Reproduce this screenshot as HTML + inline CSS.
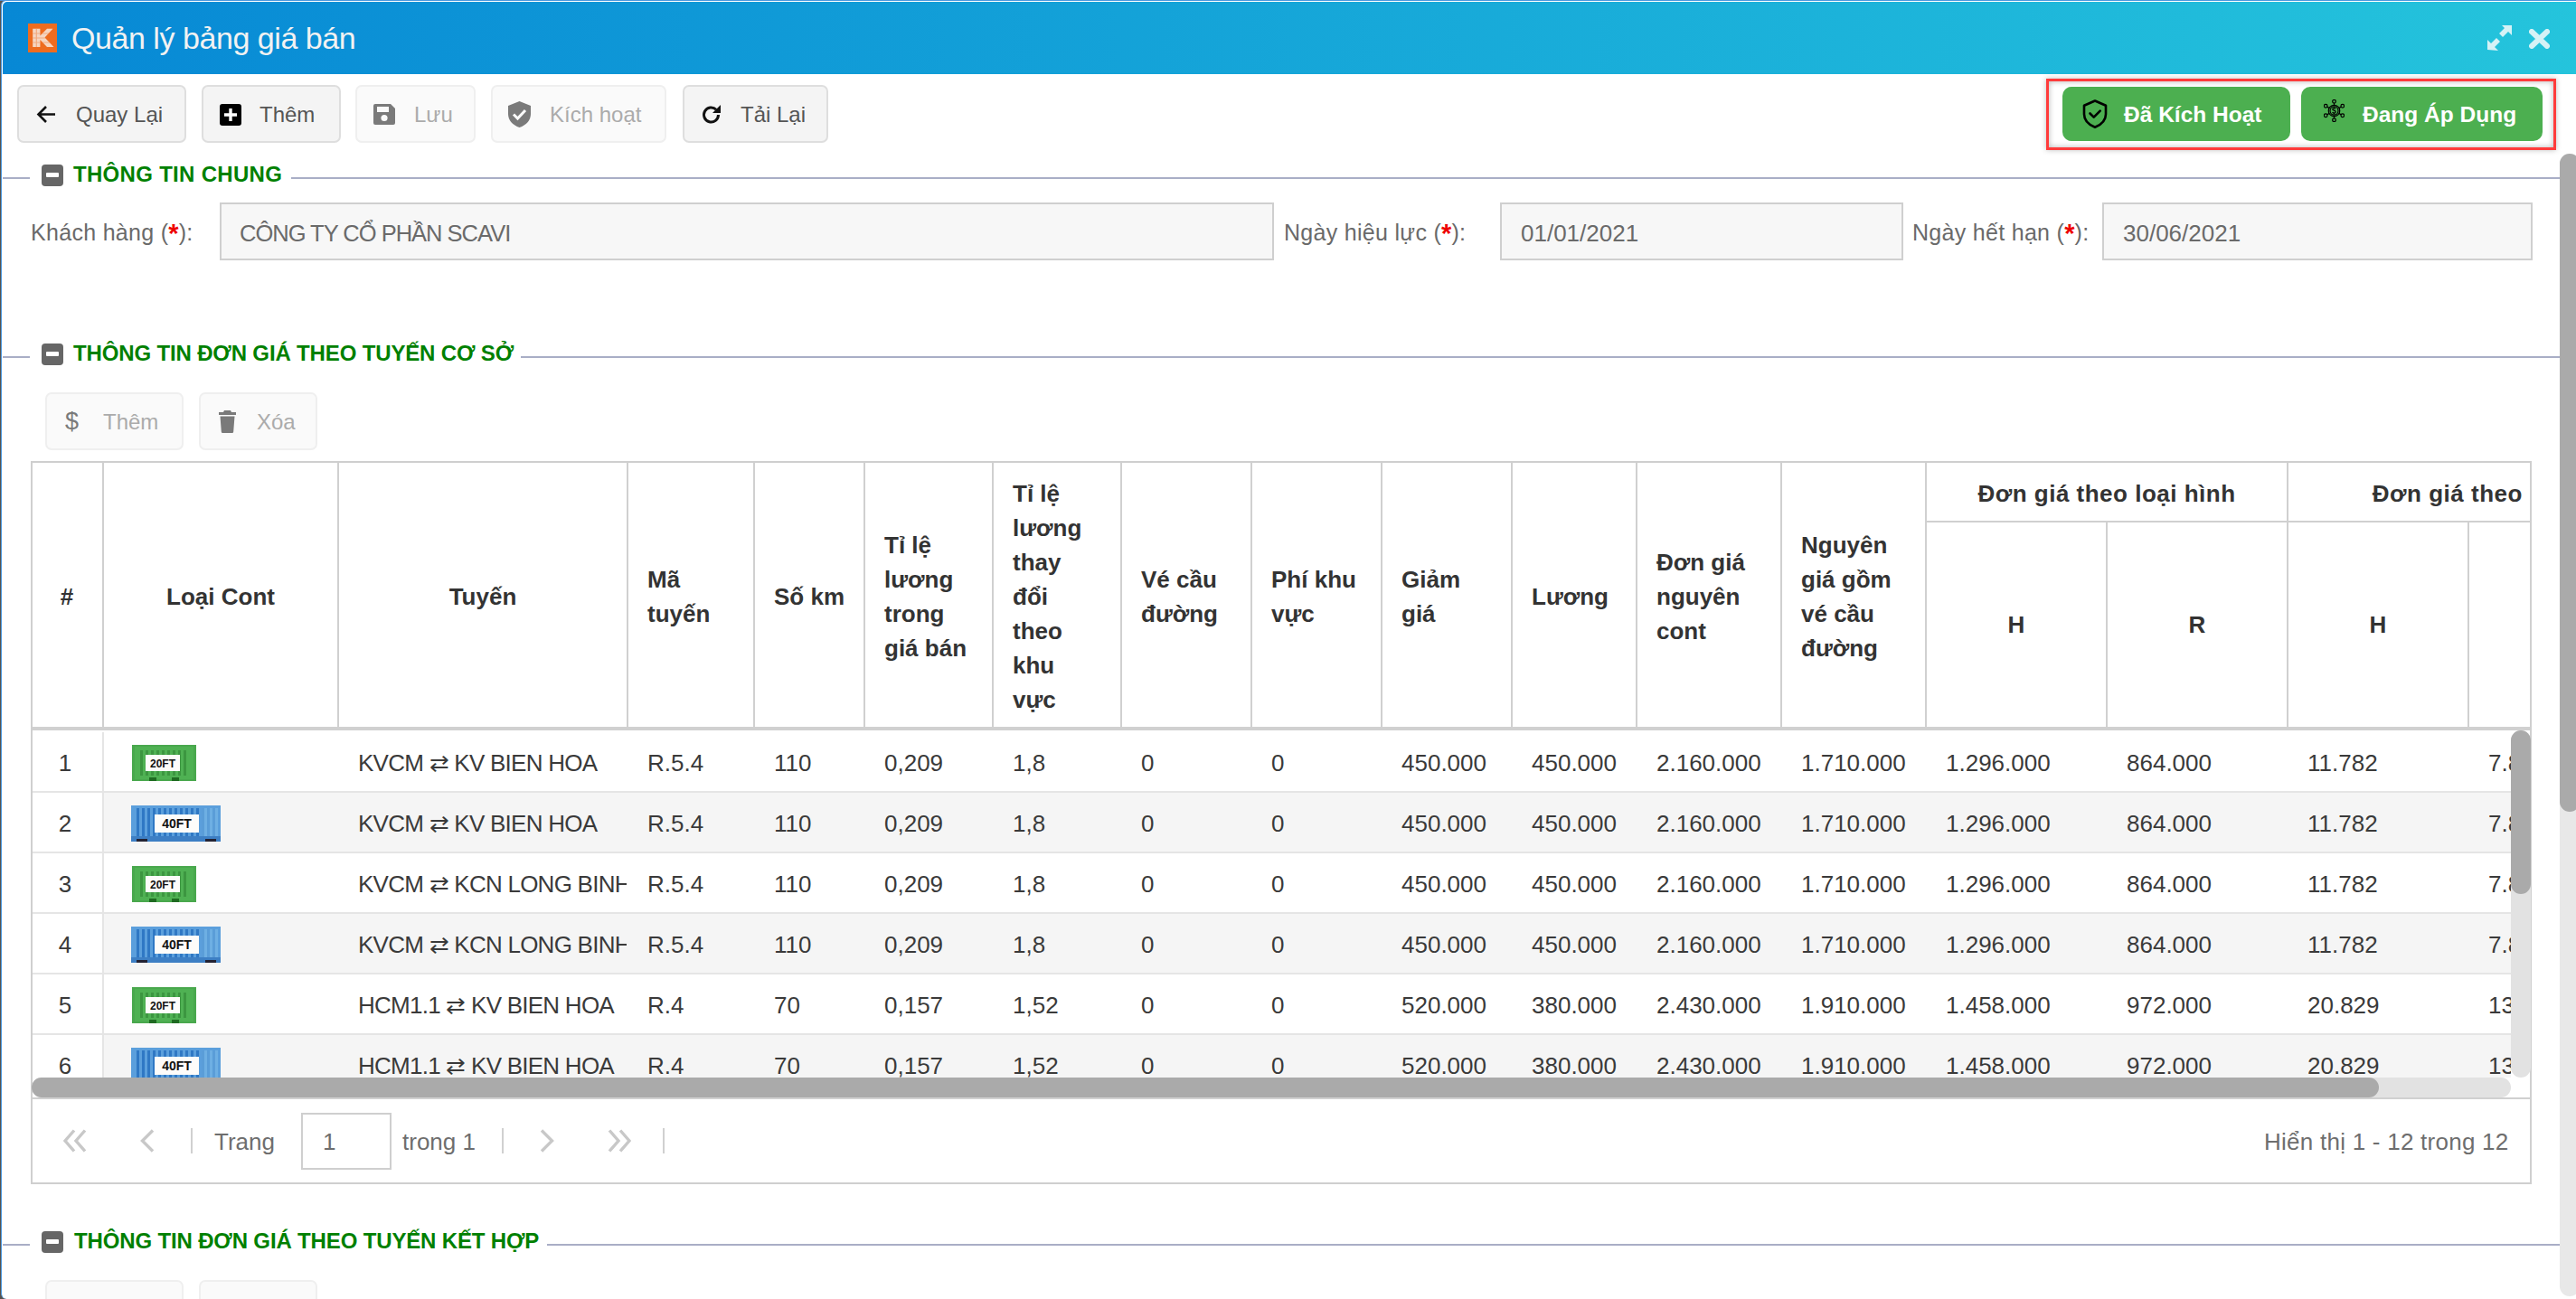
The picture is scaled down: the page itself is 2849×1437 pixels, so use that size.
<!DOCTYPE html>
<html><head><meta charset="utf-8">
<style>
*{box-sizing:border-box;margin:0;padding:0}
html,body{width:2849px;height:1437px;overflow:hidden;background:#57534f;font-family:"Liberation Sans",sans-serif}
.a{position:absolute}
.t{position:absolute;white-space:nowrap;line-height:1}
#topline{left:0;top:0;width:2849px;height:1px;background:#4a90d9}
#win{left:1px;top:0;width:2900px;height:1437px;background:#fff;border:1px solid #4a98df;border-bottom:0;border-radius:6px}
#tbar{left:3px;top:2px;width:2900px;height:80px;background:linear-gradient(90deg,#0788d5 0%,#25c5dc 100%);border-radius:5px 0 0 0}
.btn{position:absolute;top:94px;height:64px;border:2px solid #dedede;background:#f4f4f4;border-radius:7px}
.btn.dis{border-color:#efefef;background:#fafafa}
.bt{position:absolute;font-size:24px;color:#555;white-space:nowrap;line-height:1}
.dis .bt{color:#ababab}
.sline{position:absolute;height:2px;background:#a9aec6}
.minus{position:absolute;width:24px;height:24px;background:#666;border-radius:4px}
.minus:after{content:"";position:absolute;left:5px;top:9px;width:14px;height:5px;background:#fff;border-radius:1px}
.stitle{position:absolute;font-weight:bold;color:#008000;font-size:24px;white-space:nowrap;line-height:1}
.lbl{position:absolute;font-size:25px;letter-spacing:.3px;color:#6a6a6a;white-space:nowrap;line-height:1}
.lbl b{color:#e00;font-weight:bold;font-size:29px;line-height:0;position:relative;top:2px;letter-spacing:0}
.inp{position:absolute;top:224px;height:64px;border:2px solid #cfcfcf;background:#f7f7f7}
.inp span{position:absolute;font-size:24px;color:#6a6a6a;white-space:nowrap;line-height:1}
.gbtn{position:absolute;top:96px;height:60px;background:#4caf50;border-radius:10px}
.gbtn .gt{position:absolute;font-weight:bold;font-size:24.5px;color:#fff;white-space:nowrap;line-height:1}
.hc{position:absolute;display:flex;align-items:center;padding:3px 10px 0 22px;font-weight:bold;font-size:26px;line-height:38px;color:#333;white-space:nowrap}
.hc.cen{justify-content:center;text-align:center;padding-left:0;padding-right:0}
.vs{position:absolute;width:2px;background:#d0d0d0}
.hs{position:absolute;height:2px;background:#d0d0d0}
.bc{position:absolute;height:65px;line-height:65px;font-size:26px;color:#3a3a3a;white-space:nowrap;padding-top:2px}
.bc.cen{text-align:center}
.sbtn{position:absolute;height:64px;border:2px solid #efefef;background:#fafafa;border-radius:7px}
.sbtn .bt{color:#ababab}
.pg{position:absolute;font-size:26px;color:#6e6e6e;white-space:nowrap;line-height:1}
.pvs{position:absolute;width:2px;height:28px;background:#d0d0d0}
</style></head>
<body>
<svg width="0" height="0" style="position:absolute">
<defs>
<symbol id="c20" viewBox="0 0 71 40">
<rect x="0" y="0" width="71" height="40" fill="#49a84d"/>
<rect x="3" y="2" width="65" height="36" fill="#4fb153"/>
<g fill="#3c9640"><rect x="9" y="6" width="3" height="28"/><rect x="15" y="6" width="3" height="28"/><rect x="21" y="6" width="3" height="28"/><rect x="27" y="6" width="3" height="28"/><rect x="33" y="6" width="3" height="28"/><rect x="39" y="6" width="3" height="28"/><rect x="45" y="6" width="3" height="28"/><rect x="51" y="6" width="3" height="28"/><rect x="57" y="6" width="3" height="28"/></g>
<rect x="15" y="11" width="38" height="18" fill="#fdfcfa"/>
<text x="34" y="25" font-family="Liberation Sans" font-weight="bold" font-size="12" text-anchor="middle" fill="#111">20FT</text>
<rect x="19" y="36" width="8" height="4" fill="#1f6b22"/><rect x="44" y="36" width="8" height="4" fill="#1f6b22"/>
</symbol>
<symbol id="c40" viewBox="0 0 99 40">
<rect x="0" y="0" width="99" height="40" fill="#5b9fdc"/>
<g fill="#2f78c4"><rect x="6" y="3" width="3" height="31"/><rect x="12" y="3" width="3" height="31"/><rect x="18" y="3" width="3" height="31"/><rect x="24" y="3" width="3" height="31"/><rect x="30" y="3" width="3" height="31"/><rect x="36" y="3" width="3" height="31"/><rect x="42" y="3" width="3" height="31"/><rect x="48" y="3" width="3" height="31"/><rect x="54" y="3" width="3" height="31"/><rect x="60" y="3" width="3" height="31"/><rect x="66" y="3" width="3" height="31"/><rect x="72" y="3" width="3" height="31"/><rect x="78" y="3" width="3" height="31"/><rect x="84" y="3" width="3" height="31"/><rect x="90" y="3" width="3" height="31"/></g>
<rect x="78" y="3" width="18" height="31" fill="#7dbbe9" opacity=".55"/>
<rect x="26" y="10" width="49" height="20" fill="#fdfcfa"/>
<text x="50.5" y="25" font-family="Liberation Sans" font-weight="bold" font-size="14" text-anchor="middle" fill="#111">40FT</text>
<rect x="0" y="34" width="99" height="6" fill="#3d7fc4"/>
<rect x="6" y="37" width="12" height="3" fill="#223"/><rect x="82" y="37" width="12" height="3" fill="#223"/>
</symbol>
</defs></svg>
<div id="topline" class="a"></div>
<div id="win" class="a"></div>
<div id="tbar" class="a"></div>

<!-- logo -->
<div class="a" style="left:31px;top:26px;width:32px;height:32px;background:#ee6c1f"></div>
<svg class="a" style="left:31px;top:26px" width="32" height="32" viewBox="0 0 32 32"><defs><clipPath id="kc"><path d="M5.2 5.8H13.4V13.5L21 5.8H27.5L18.5 15.5L28.5 26H21L13.4 18V26H5.2Z"/></clipPath></defs><path d="M5.2 5.8H13.4V13.5L21 5.8H27.5L18.5 15.5L28.5 26H21L13.4 18V26H5.2Z" fill="#f6d6c2"/><g clip-path="url(#kc)" stroke="#f0a070" stroke-width="1.2" opacity=".8"><path d="M9.3 5v22M4 16h26M4 11h26M4 21h26"/></g></svg>
<div class="t" id="title" style="left:79px;top:24.5px;font-size:34px;letter-spacing:-.45px;color:#f2f2f2">Quản lý bảng giá bán</div>

<!-- expand / close -->
<svg class="a" style="left:2750px;top:27px" width="29" height="29" viewBox="0 0 29 29" fill="#d5f2f6"><path d="M17 1h11v11l-4-4-6 6-4-4 6-6z"/><path d="M1 28V17l4 4 6-6 4 4-6 6 4 4z"/></svg>
<svg class="a" style="left:2797px;top:32px" width="23" height="22" viewBox="0 0 23 22"><path d="M3 3L20 19M20 3L3 19" stroke="#d5f2f6" stroke-width="6" stroke-linecap="round"/></svg>

<!-- toolbar -->
<div class="btn" style="left:19px;width:187px"><div class="bt" style="left:63px;top:19px">Quay Lại</div></div>
<div class="btn" style="left:223px;width:154px"><div class="bt" style="left:62px;top:19px">Thêm</div></div>
<div class="btn dis" style="left:393px;width:133px"><div class="bt" style="left:63px;top:19px">Lưu</div></div>
<div class="btn dis" style="left:543px;width:194px"><div class="bt" style="left:63px;top:19px">Kích hoạt</div></div>
<div class="btn" style="left:755px;width:161px"><div class="bt" style="left:62px;top:19px">Tải Lại</div></div>


<!-- toolbar icons -->
<svg class="a" style="left:40px;top:116px" width="22" height="21" viewBox="0 0 22 21"><path d="M21 10.5H3M11 2L2.5 10.5 11 19" fill="none" stroke="#111" stroke-width="2.6"/></svg>
<svg class="a" style="left:243px;top:115px" width="24" height="24" viewBox="0 0 24 24"><rect x="0" y="0" width="24" height="24" rx="3" fill="#000"/><path d="M12 5v14M5 12h14" stroke="#fff" stroke-width="3.4"/></svg>
<svg class="a" style="left:413px;top:115px" width="24" height="23" viewBox="0 0 24 23"><path d="M2 0h17l5 5v16a2 2 0 0 1-2 2H2a2 2 0 0 1-2-2V2a2 2 0 0 1 2-2z" fill="#7a7a7a"/><rect x="4" y="3" width="13" height="6" fill="#fafafa"/><circle cx="12" cy="15.5" r="3.6" fill="#fafafa"/></svg>
<svg class="a" style="left:562px;top:112px" width="25" height="29" viewBox="0 0 25 29"><path d="M12.5 0L25 5v9c0 7-5 12.5-12.5 15C5 26.5 0 21 0 14V5z" fill="#7a7a7a"/><path d="M6 14.5l4.5 4.5 8.5-9" fill="none" stroke="#fafafa" stroke-width="3"/></svg>
<svg class="a" style="left:775px;top:115px" width="24" height="24" viewBox="0 0 24 24"><path d="M19.5 12a8 8 0 1 1-2.4-5.7" fill="none" stroke="#111" stroke-width="3"/><path d="M22 1v9h-9z" fill="#111"/></svg>
<!-- red box -->
<div class="a" style="left:2263px;top:87px;width:564px;height:79px;border:3px solid #ff3b3b;box-shadow:0 0 6px rgba(0,0,0,.25), inset 0 0 6px rgba(0,0,0,.3)"></div>
<div class="gbtn" style="left:2281px;width:252px"><div class="gt" style="left:68px;top:19px">Đã Kích Hoạt</div></div>
<div class="gbtn" style="left:2545px;width:267px"><div class="gt" style="left:68px;top:19px">Đang Áp Dụng</div></div>
<!-- green button icons -->
<svg class="a" style="left:2303px;top:110px" width="28" height="32" viewBox="0 0 28 32"><path d="M14 1.5L26 6.8v9.5c0 6.5-5 11.7-12 14.5C7 28 2 22.8 2 16.3V6.8z" fill="none" stroke="#000" stroke-width="2.6" stroke-linejoin="round"/><path d="M8.5 15.5l4.2 4.2 7-7" fill="none" stroke="#000" stroke-width="2.6" stroke-linecap="round" stroke-linejoin="round"/></svg>
<svg class="a" style="left:2569.5px;top:110px" width="23" height="25" viewBox="0 0 24 26" fill="none" stroke="#000" stroke-width="1.3"><circle cx="12" cy="13" r="6.5"/><circle cx="12" cy="13" r="4.7"/><circle cx="12" cy="2.3" r="1.9"/><circle cx="12" cy="23.7" r="1.9"/><circle cx="2.3" cy="7.5" r="1.9"/><circle cx="21.7" cy="7.5" r="1.9"/><circle cx="2.3" cy="18.5" r="1.9"/><circle cx="21.7" cy="18.5" r="1.9"/><path d="M12 4.2v2.3M12 19.5v2.3M4 8.5l2.5 1.5M20 8.5l-2.5 1.5M4 17.5l2.5-1.5M20 17.5l-2.5-1.5"/><path d="M13.6 11c-.3-.8-1-1.1-1.7-1.1-1 0-1.7.6-1.7 1.4 0 1.8 3.5 1 3.5 2.9 0 .9-.8 1.5-1.8 1.5-.8 0-1.5-.4-1.8-1.2M12 8.8v1.1M12 16v1.1"/></svg>


<!-- section 1 -->
<div class="sline" style="left:3px;top:196px;width:30px"></div>
<div class="sline" style="left:322px;top:196px;width:2509px"></div>
<div class="minus" style="left:46px;top:182px"></div>
<div class="stitle" style="left:81px;top:180.5px;letter-spacing:.3px">THÔNG TIN CHUNG</div>

<div class="lbl" style="left:34px;top:245px">Khách hàng (<b>*</b>):</div>
<div class="inp" style="left:243px;width:1166px"><span style="left:20px;top:20px;font-size:25.5px;letter-spacing:-1px">CÔNG TY CỔ PHẦN SCAVI</span></div>
<div class="lbl" style="left:1420px;top:245px">Ngày hiệu lực (<b>*</b>):</div>
<div class="inp" style="left:1659px;width:446px"><span style="left:21px;top:18.5px;font-size:26px">01/01/2021</span></div>
<div class="lbl" style="left:2115px;top:245px">Ngày hết hạn (<b>*</b>):</div>
<div class="inp" style="left:2325px;width:476px"><span style="left:21px;top:18.5px;font-size:26px">30/06/2021</span></div>

<!-- section 2 -->
<div class="sline" style="left:3px;top:394px;width:30px"></div>
<div class="sline" style="left:576px;top:394px;width:2255px"></div>
<div class="minus" style="left:46px;top:380px"></div>
<div class="stitle" style="left:81px;top:378.5px;letter-spacing:-.15px">THÔNG TIN ĐƠN GIÁ THEO TUYẾN CƠ SỞ</div>

<div class="sbtn" style="left:50px;top:434px;width:153px"><div class="bt" style="left:62px;top:19px">Thêm</div></div>
<div class="sbtn" style="left:220px;top:434px;width:131px"><div class="bt" style="left:62px;top:19px">Xóa</div></div>
<div class="t" style="left:72px;top:453px;font-size:27px;color:#7a7a7a">$</div>
<svg class="a" style="left:242px;top:454px" width="19" height="25" viewBox="0 0 19 25"><path d="M6 0h7l1 2h5v3H0V2h5z" fill="#7a7a7a"/><path d="M1.5 6.5h16l-1.3 17a1.5 1.5 0 0 1-1.5 1.5H4.3a1.5 1.5 0 0 1-1.5-1.5z" fill="#7a7a7a"/></svg>
<div class="a" style="left:34px;top:510px;width:2766px;height:800px;border:2px solid #cfcfcf;border-top-width:2px;background:#fff"></div>
<div class="a" id="thead" style="left:36px;top:512px;width:2762px;height:296px;overflow:hidden">
<div class="hc cen" style="left:-2px;top:0px;width:80px;height:292px;"><div>#</div></div>
<div class="hc cen" style="left:78px;top:0px;width:260px;height:292px;"><div>Loại Cont</div></div>
<div class="hc cen" style="left:338px;top:0px;width:320px;height:292px;"><div>Tuyến</div></div>
<div class="hc" style="left:658px;top:0px;width:140px;height:292px;"><div>Mã<br>tuyến</div></div>
<div class="hc" style="left:798px;top:0px;width:122px;height:292px;"><div>Số km</div></div>
<div class="hc" style="left:920px;top:0px;width:142px;height:292px;"><div>Tỉ lệ<br>lương<br>trong<br>giá bán</div></div>
<div class="hc" style="left:1062px;top:0px;width:142px;height:292px;"><div>Tỉ lệ<br>lương<br>thay<br>đổi<br>theo<br>khu<br>vực</div></div>
<div class="hc" style="left:1204px;top:0px;width:144px;height:292px;"><div>Vé cầu<br>đường</div></div>
<div class="hc" style="left:1348px;top:0px;width:144px;height:292px;"><div>Phí khu<br>vực</div></div>
<div class="hc" style="left:1492px;top:0px;width:144px;height:292px;"><div>Giảm<br>giá</div></div>
<div class="hc" style="left:1636px;top:0px;width:138px;height:292px;"><div>Lương</div></div>
<div class="hc" style="left:1774px;top:0px;width:160px;height:292px;"><div>Đơn giá<br>nguyên<br>cont</div></div>
<div class="hc" style="left:1934px;top:0px;width:160px;height:292px;"><div>Nguyên<br>giá gồm<br>vé cầu<br>đường</div></div>
<div class="hc cen" style="left:2094px;top:0px;width:400px;height:65px;"><div><span style="letter-spacing:.5px">Đơn giá theo loại hình</span></div></div>
<div class="hc cen" style="left:2494px;top:0px;width:400px;height:65px;"><div><span style="letter-spacing:.5px">Đơn giá theo km</span></div></div>
<div class="hc cen" style="left:2094px;top:66px;width:200px;height:226px;padding-top:0;"><div>H</div></div>
<div class="hc cen" style="left:2294px;top:66px;width:200px;height:226px;padding-top:0;"><div>R</div></div>
<div class="hc cen" style="left:2494px;top:66px;width:200px;height:226px;padding-top:0;"><div>H</div></div>
<div class="hc cen" style="left:2694px;top:66px;width:200px;height:226px;padding-top:0;"><div>R</div></div>
<div class="vs" style="left:77px;top:0;height:292px"></div>
<div class="vs" style="left:337px;top:0;height:292px"></div>
<div class="vs" style="left:657px;top:0;height:292px"></div>
<div class="vs" style="left:797px;top:0;height:292px"></div>
<div class="vs" style="left:919px;top:0;height:292px"></div>
<div class="vs" style="left:1061px;top:0;height:292px"></div>
<div class="vs" style="left:1203px;top:0;height:292px"></div>
<div class="vs" style="left:1347px;top:0;height:292px"></div>
<div class="vs" style="left:1491px;top:0;height:292px"></div>
<div class="vs" style="left:1635px;top:0;height:292px"></div>
<div class="vs" style="left:1773px;top:0;height:292px"></div>
<div class="vs" style="left:1933px;top:0;height:292px"></div>
<div class="vs" style="left:2093px;top:0;height:292px"></div>
<div class="vs" style="left:2293px;top:65px;height:227px"></div>
<div class="vs" style="left:2493px;top:0;height:292px"></div>
<div class="vs" style="left:2693px;top:65px;height:227px"></div>
<div class="hs" style="left:2094px;top:64px;width:2762px"></div>
</div>
<div class="a" style="left:36px;top:804px;width:2762px;height:4px;background:#d0d0d0"></div>
<div class="a" id="tbody" style="left:36px;top:808px;width:2741px;height:384px;overflow:hidden">
<div class="a" style="left:0;top:67px;width:2800px;height:2px;background:#e5e5e5"></div>
<div class="bc cen" style="left:-2px;top:2px;width:76px">1</div>
<svg class="a" style="left:110px;top:16px" width="71" height="40"><use href="#c20"/></svg>
<div class="bc" style="left:360px;top:2px;width:297px;overflow:hidden;letter-spacing:-.75px">KVCM ⇄ KV BIEN HOA</div>
<div class="bc" style="left:680px;top:2px">R.5.4</div>
<div class="bc" style="left:820px;top:2px">110</div>
<div class="bc" style="left:942px;top:2px">0,209</div>
<div class="bc" style="left:1084px;top:2px">1,8</div>
<div class="bc" style="left:1226px;top:2px">0</div>
<div class="bc" style="left:1370px;top:2px">0</div>
<div class="bc" style="left:1514px;top:2px">450.000</div>
<div class="bc" style="left:1658px;top:2px">450.000</div>
<div class="bc" style="left:1796px;top:2px">2.160.000</div>
<div class="bc" style="left:1956px;top:2px">1.710.000</div>
<div class="bc" style="left:2116px;top:2px">1.296.000</div>
<div class="bc" style="left:2316px;top:2px">864.000</div>
<div class="bc" style="left:2516px;top:2px">11.782</div>
<div class="bc" style="left:2716px;top:2px">7.855</div>
<div class="a" style="left:79px;top:69px;width:2800px;height:65px;background:#f5f5f5"></div>
<div class="a" style="left:0;top:134px;width:2800px;height:2px;background:#e5e5e5"></div>
<div class="bc cen" style="left:-2px;top:69px;width:76px">2</div>
<svg class="a" style="left:109px;top:83px" width="99" height="40"><use href="#c40"/></svg>
<div class="bc" style="left:360px;top:69px;width:297px;overflow:hidden;letter-spacing:-.75px">KVCM ⇄ KV BIEN HOA</div>
<div class="bc" style="left:680px;top:69px">R.5.4</div>
<div class="bc" style="left:820px;top:69px">110</div>
<div class="bc" style="left:942px;top:69px">0,209</div>
<div class="bc" style="left:1084px;top:69px">1,8</div>
<div class="bc" style="left:1226px;top:69px">0</div>
<div class="bc" style="left:1370px;top:69px">0</div>
<div class="bc" style="left:1514px;top:69px">450.000</div>
<div class="bc" style="left:1658px;top:69px">450.000</div>
<div class="bc" style="left:1796px;top:69px">2.160.000</div>
<div class="bc" style="left:1956px;top:69px">1.710.000</div>
<div class="bc" style="left:2116px;top:69px">1.296.000</div>
<div class="bc" style="left:2316px;top:69px">864.000</div>
<div class="bc" style="left:2516px;top:69px">11.782</div>
<div class="bc" style="left:2716px;top:69px">7.855</div>
<div class="a" style="left:0;top:201px;width:2800px;height:2px;background:#e5e5e5"></div>
<div class="bc cen" style="left:-2px;top:136px;width:76px">3</div>
<svg class="a" style="left:110px;top:150px" width="71" height="40"><use href="#c20"/></svg>
<div class="bc" style="left:360px;top:136px;width:297px;overflow:hidden;letter-spacing:-.75px">KVCM ⇄ KCN LONG BINH</div>
<div class="bc" style="left:680px;top:136px">R.5.4</div>
<div class="bc" style="left:820px;top:136px">110</div>
<div class="bc" style="left:942px;top:136px">0,209</div>
<div class="bc" style="left:1084px;top:136px">1,8</div>
<div class="bc" style="left:1226px;top:136px">0</div>
<div class="bc" style="left:1370px;top:136px">0</div>
<div class="bc" style="left:1514px;top:136px">450.000</div>
<div class="bc" style="left:1658px;top:136px">450.000</div>
<div class="bc" style="left:1796px;top:136px">2.160.000</div>
<div class="bc" style="left:1956px;top:136px">1.710.000</div>
<div class="bc" style="left:2116px;top:136px">1.296.000</div>
<div class="bc" style="left:2316px;top:136px">864.000</div>
<div class="bc" style="left:2516px;top:136px">11.782</div>
<div class="bc" style="left:2716px;top:136px">7.855</div>
<div class="a" style="left:79px;top:203px;width:2800px;height:65px;background:#f5f5f5"></div>
<div class="a" style="left:0;top:268px;width:2800px;height:2px;background:#e5e5e5"></div>
<div class="bc cen" style="left:-2px;top:203px;width:76px">4</div>
<svg class="a" style="left:109px;top:217px" width="99" height="40"><use href="#c40"/></svg>
<div class="bc" style="left:360px;top:203px;width:297px;overflow:hidden;letter-spacing:-.75px">KVCM ⇄ KCN LONG BINH</div>
<div class="bc" style="left:680px;top:203px">R.5.4</div>
<div class="bc" style="left:820px;top:203px">110</div>
<div class="bc" style="left:942px;top:203px">0,209</div>
<div class="bc" style="left:1084px;top:203px">1,8</div>
<div class="bc" style="left:1226px;top:203px">0</div>
<div class="bc" style="left:1370px;top:203px">0</div>
<div class="bc" style="left:1514px;top:203px">450.000</div>
<div class="bc" style="left:1658px;top:203px">450.000</div>
<div class="bc" style="left:1796px;top:203px">2.160.000</div>
<div class="bc" style="left:1956px;top:203px">1.710.000</div>
<div class="bc" style="left:2116px;top:203px">1.296.000</div>
<div class="bc" style="left:2316px;top:203px">864.000</div>
<div class="bc" style="left:2516px;top:203px">11.782</div>
<div class="bc" style="left:2716px;top:203px">7.855</div>
<div class="a" style="left:0;top:335px;width:2800px;height:2px;background:#e5e5e5"></div>
<div class="bc cen" style="left:-2px;top:270px;width:76px">5</div>
<svg class="a" style="left:110px;top:284px" width="71" height="40"><use href="#c20"/></svg>
<div class="bc" style="left:360px;top:270px;width:297px;overflow:hidden;letter-spacing:-.75px">HCM1.1 ⇄ KV BIEN HOA</div>
<div class="bc" style="left:680px;top:270px">R.4</div>
<div class="bc" style="left:820px;top:270px">70</div>
<div class="bc" style="left:942px;top:270px">0,157</div>
<div class="bc" style="left:1084px;top:270px">1,52</div>
<div class="bc" style="left:1226px;top:270px">0</div>
<div class="bc" style="left:1370px;top:270px">0</div>
<div class="bc" style="left:1514px;top:270px">520.000</div>
<div class="bc" style="left:1658px;top:270px">380.000</div>
<div class="bc" style="left:1796px;top:270px">2.430.000</div>
<div class="bc" style="left:1956px;top:270px">1.910.000</div>
<div class="bc" style="left:2116px;top:270px">1.458.000</div>
<div class="bc" style="left:2316px;top:270px">972.000</div>
<div class="bc" style="left:2516px;top:270px">20.829</div>
<div class="bc" style="left:2716px;top:270px">13.886</div>
<div class="a" style="left:79px;top:337px;width:2800px;height:65px;background:#f5f5f5"></div>
<div class="a" style="left:0;top:402px;width:2800px;height:2px;background:#e5e5e5"></div>
<div class="bc cen" style="left:-2px;top:337px;width:76px">6</div>
<svg class="a" style="left:109px;top:351px" width="99" height="40"><use href="#c40"/></svg>
<div class="bc" style="left:360px;top:337px;width:297px;overflow:hidden;letter-spacing:-.75px">HCM1.1 ⇄ KV BIEN HOA</div>
<div class="bc" style="left:680px;top:337px">R.4</div>
<div class="bc" style="left:820px;top:337px">70</div>
<div class="bc" style="left:942px;top:337px">0,157</div>
<div class="bc" style="left:1084px;top:337px">1,52</div>
<div class="bc" style="left:1226px;top:337px">0</div>
<div class="bc" style="left:1370px;top:337px">0</div>
<div class="bc" style="left:1514px;top:337px">520.000</div>
<div class="bc" style="left:1658px;top:337px">380.000</div>
<div class="bc" style="left:1796px;top:337px">2.430.000</div>
<div class="bc" style="left:1956px;top:337px">1.910.000</div>
<div class="bc" style="left:2116px;top:337px">1.458.000</div>
<div class="bc" style="left:2316px;top:337px">972.000</div>
<div class="bc" style="left:2516px;top:337px">20.829</div>
<div class="bc" style="left:2716px;top:337px">13.886</div>
<div class="a" style="left:77px;top:2px;width:2px;height:400px;background:#e5e5e5"></div>
</div>
<div class="a" style="left:2777px;top:808px;width:22px;height:384px;background:#e2e2e2;border-radius:11px"></div>
<div class="a" style="left:2777px;top:808px;width:22px;height:181px;background:#aaa;border-radius:11px"></div>
<div class="a" style="left:35px;top:1192px;width:2742px;height:22px;background:#e2e2e2;border-radius:11px"></div>
<div class="a" style="left:35px;top:1192px;width:2596px;height:22px;background:#aaa;border-radius:11px"></div>
<div class="a" style="left:36px;top:1214px;width:2762px;height:2px;background:#d0d0d0"></div>

<div class="a" style="left:34px;top:1216px;width:2766px;height:94px;border:2px solid #cfcfcf;border-top:none"></div>
<svg class="a" style="left:70px;top:1249px" width="26" height="26" viewBox="0 0 26 26" fill="none" stroke="#c8c8c8" stroke-width="3.4"><path d="M12 1.5L2 13l10 11.5M24 1.5L14 13l10 11.5"/></svg>
<svg class="a" style="left:155px;top:1249px" width="16" height="26" viewBox="0 0 16 26" fill="none" stroke="#c8c8c8" stroke-width="3.4"><path d="M14 1.5L2.5 13 14 24.5"/></svg>
<div class="pvs" style="left:211px;top:1248px"></div>
<div class="pg" style="left:237px;top:1250px">Trang</div>
<div class="a" style="left:333px;top:1231px;width:100px;height:63px;border:2px solid #cfcfcf;background:#fff"></div>
<div class="pg" style="left:357px;top:1250px">1</div>
<div class="pg" style="left:445px;top:1250px">trong 1</div>
<div class="pvs" style="left:555px;top:1248px"></div>
<svg class="a" style="left:597px;top:1249px" width="16" height="26" viewBox="0 0 16 26" fill="none" stroke="#c8c8c8" stroke-width="3.4"><path d="M2 1.5L13.5 13 2 24.5"/></svg>
<svg class="a" style="left:672px;top:1249px" width="26" height="26" viewBox="0 0 26 26" fill="none" stroke="#c8c8c8" stroke-width="3.4"><path d="M2 1.5L12 13 2 24.5M14 1.5L24 13 14 24.5"/></svg>
<div class="pvs" style="left:733px;top:1248px"></div>
<div class="pg" style="left:2504px;top:1250px;letter-spacing:.25px">Hiển thị 1 - 12 trong 12</div>


<!-- section 3 -->
<div class="sline" style="left:3px;top:1376px;width:30px"></div>
<div class="sline" style="left:605px;top:1376px;width:2226px"></div>
<div class="minus" style="left:46px;top:1362px"></div>
<div class="stitle" style="left:82px;top:1361px;letter-spacing:-.15px">THÔNG TIN ĐƠN GIÁ THEO TUYẾN KẾT HỢP</div>

<div class="sbtn" style="left:50px;top:1416px;width:153px"></div>
<div class="sbtn" style="left:220px;top:1416px;width:131px"></div>
<!-- page scrollbar -->
<div class="a" style="left:2831px;top:170px;width:22px;height:1264px;background:#e8e8e8;border-radius:11px"></div>
<div class="a" style="left:2831px;top:170px;width:22px;height:728px;background:#aaa;border-radius:11px"></div>
</body></html>
